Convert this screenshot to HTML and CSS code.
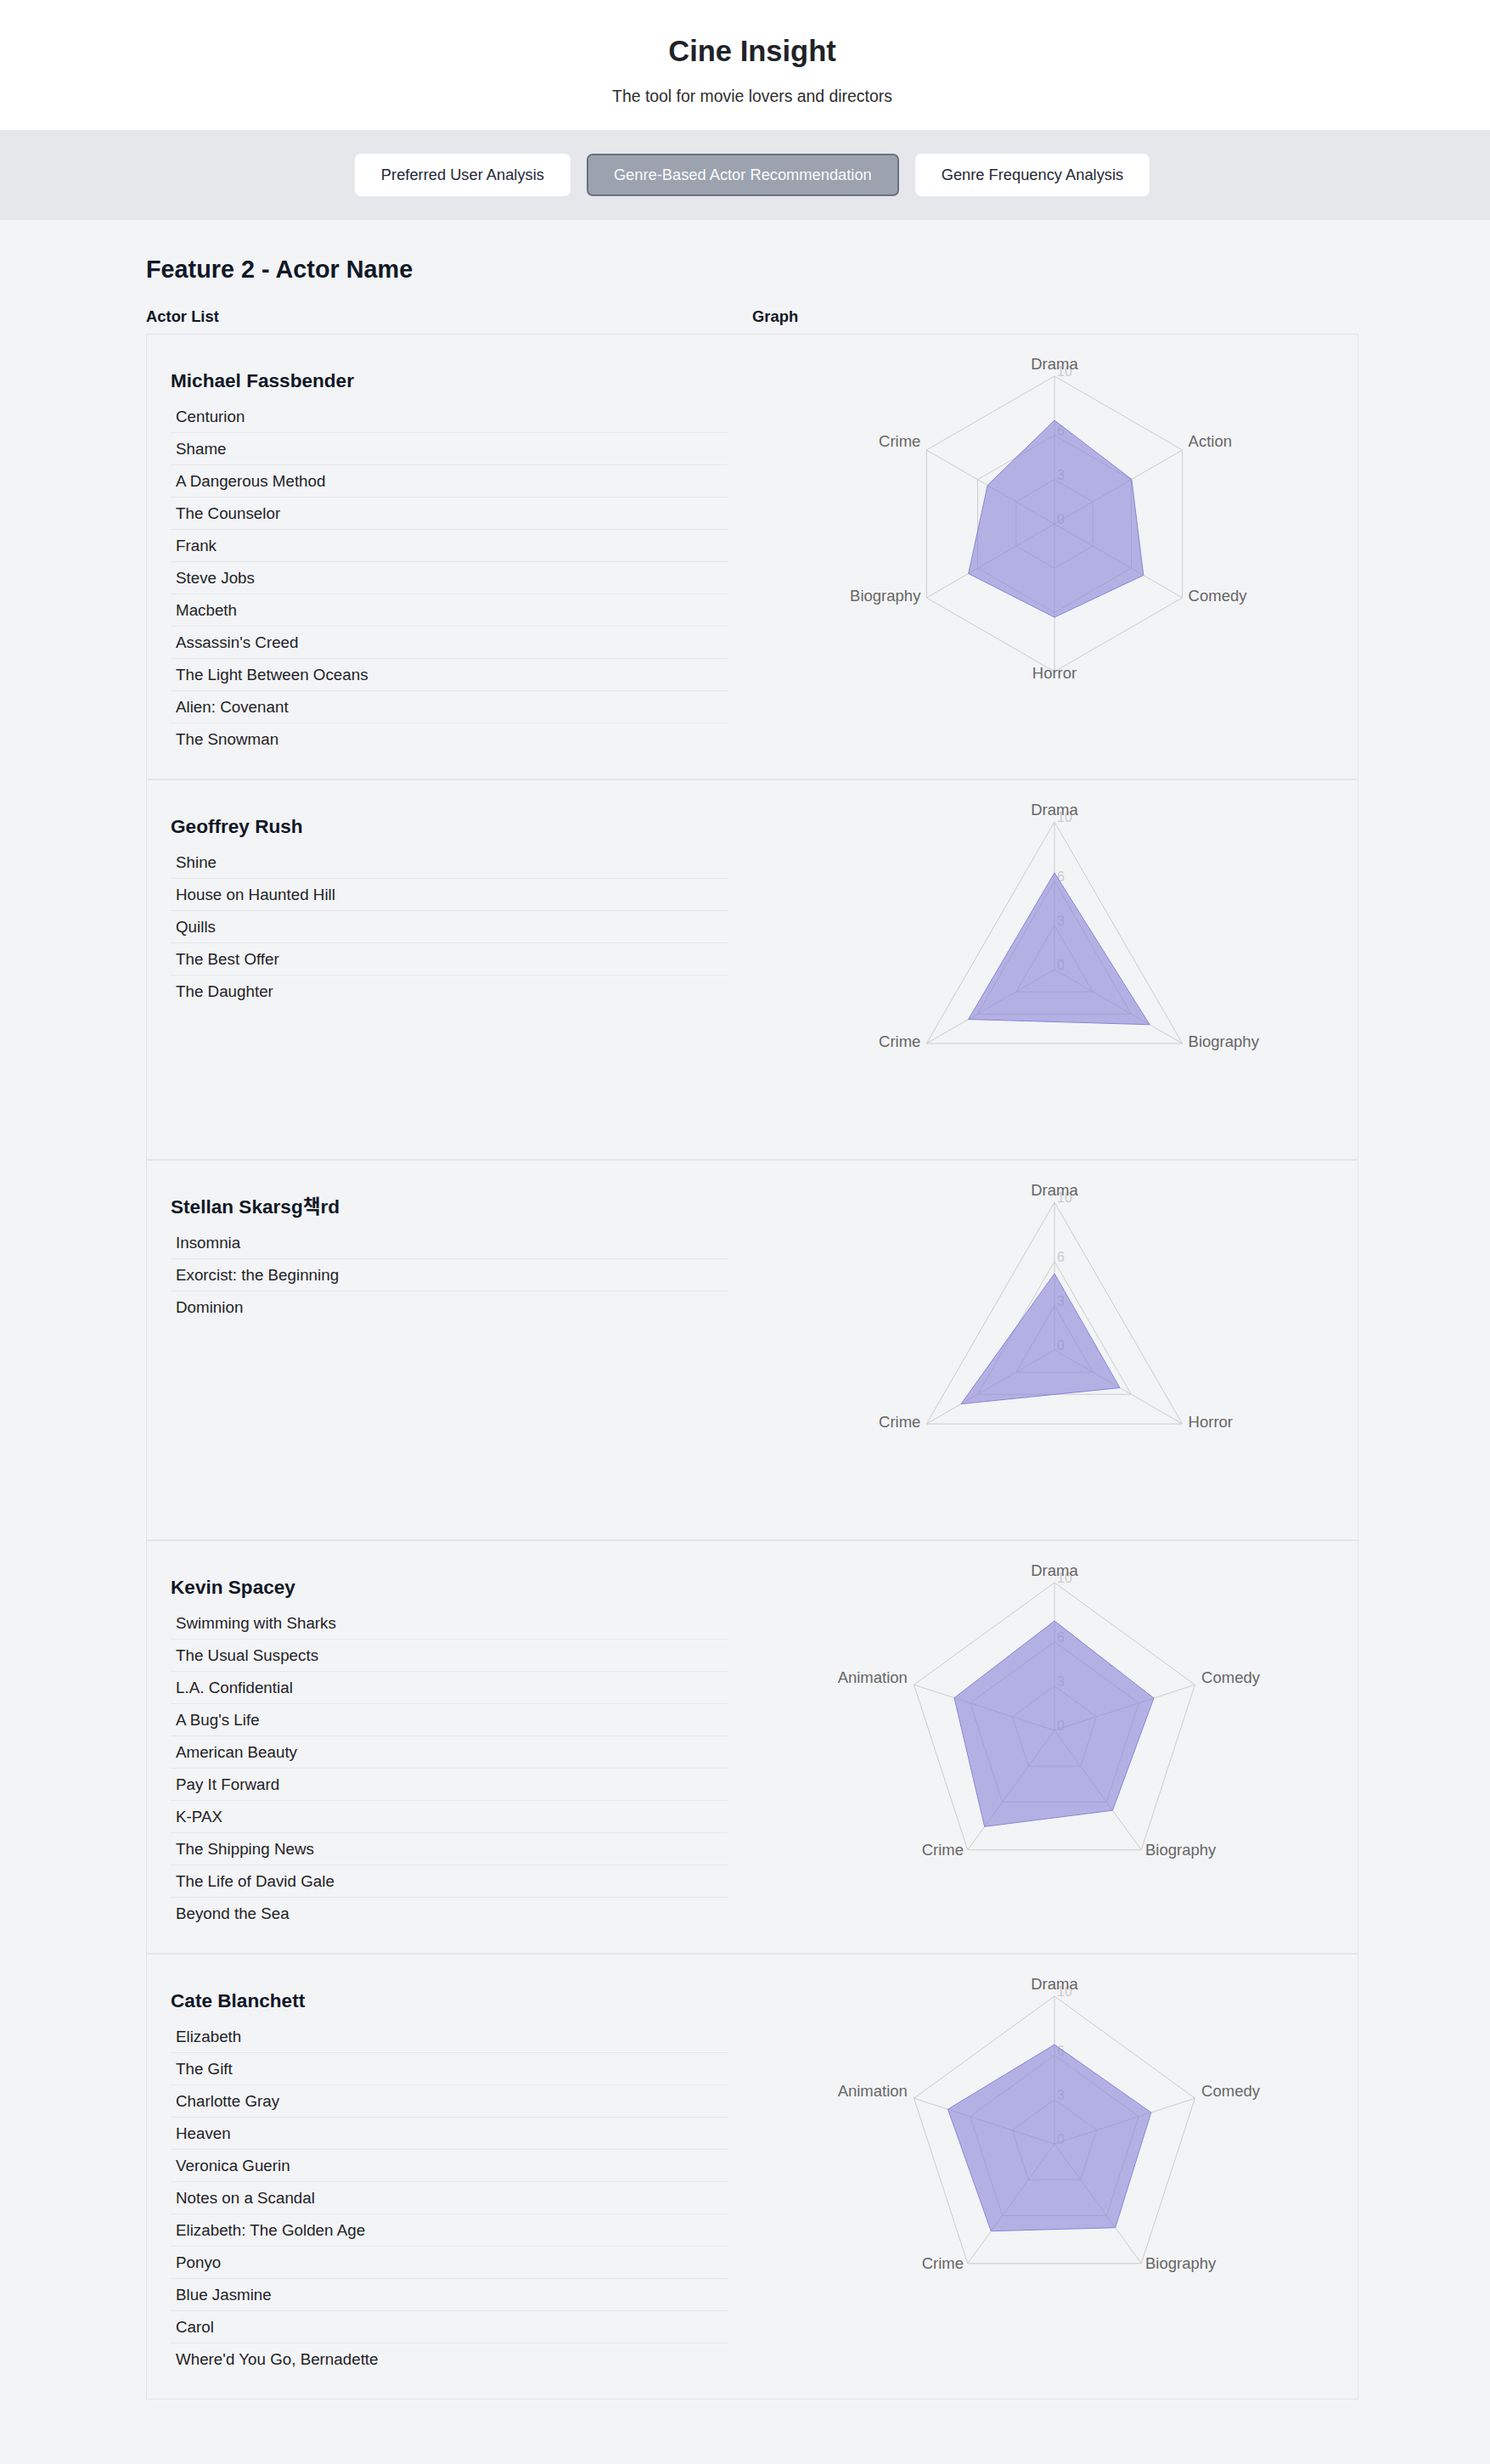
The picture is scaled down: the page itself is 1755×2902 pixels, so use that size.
FILE: index.html
```html
<!DOCTYPE html>
<html lang="en">
<head>
<meta charset="utf-8">
<title>Cine Insight</title>
<link rel="stylesheet" href="styles.css">
</head>
<body>
<header class="site-header">
  <h1 class="site-title">Cine Insight</h1>
  <p class="site-subtitle">The tool for movie lovers and directors</p>
</header>
<nav class="tabs">
  <button class="tab">Preferred User Analysis</button>
  <button class="tab tab-active">Genre-Based Actor Recommendation</button>
  <button class="tab">Genre Frequency Analysis</button>
</nav>
<main class="content">
  <h2 class="feature-title">Feature 2 - Actor Name</h2>
  <div class="col-heads"><span>Actor List</span><span>Graph</span></div>
  <section class="actor-list">

    <article class="actor-card">
      <div class="films">
        <h3 class="actor-name">Michael Fassbender</h3>
        <ul class="film-list">
          <li>Centurion</li><li>Shame</li><li>A Dangerous Method</li><li>The Counselor</li><li>Frank</li><li>Steve Jobs</li><li>Macbeth</li><li>Assassin's Creed</li><li>The Light Between Oceans</li><li>Alien: Covenant</li><li>The Snowman</li>
        </ul>
      </div>
      <div class="graph">
        <svg class="radar" width="658" height="392" viewBox="0 0 658 392">
          <polygon class="grid" points="329,22 479.69,109 479.69,283 329,370 178.31,283 178.31,109"/>
          <polygon class="grid" points="329,91.6 419.41,143.8 419.41,248.2 329,300.4 238.59,248.2 238.59,143.8"/>
          <polygon class="grid" points="329,143.8 374.21,169.9 374.21,222.1 329,248.2 283.79,222.1 283.79,169.9"/>
          <line class="grid" x1="329" y1="196" x2="329" y2="22"/>
          <line class="grid" x1="329" y1="196" x2="479.69" y2="109"/>
          <line class="grid" x1="329" y1="196" x2="479.69" y2="283"/>
          <line class="grid" x1="329" y1="196" x2="329" y2="370"/>
          <line class="grid" x1="329" y1="196" x2="178.31" y2="283"/>
          <line class="grid" x1="329" y1="196" x2="178.31" y2="109"/>
          <text class="tick" x="332" y="196">0</text><text class="tick" x="332" y="143.8">3</text><text class="tick" x="332" y="91.6">6</text><text class="tick" x="332" y="22">10</text>
          <polygon class="area" points="329,74 419.9,143.5 433.8,256.5 329,306 227.7,254.5 250.2,150.5"/>
          <text class="axis-label mid" x="329" y="14">Drama</text>
          <text class="axis-label start" x="486.6" y="105">Action</text>
          <text class="axis-label start" x="486.6" y="287">Comedy</text>
          <text class="axis-label mid" x="329" y="378">Horror</text>
          <text class="axis-label end" x="171.4" y="287">Biography</text>
          <text class="axis-label end" x="171.4" y="105">Crime</text>
        </svg>
      </div>
    </article>

    <article class="actor-card">
      <div class="films">
        <h3 class="actor-name">Geoffrey Rush</h3>
        <ul class="film-list">
          <li>Shine</li><li>House on Haunted Hill</li><li>Quills</li><li>The Best Offer</li><li>The Daughter</li>
        </ul>
      </div>
      <div class="graph">
        <svg class="radar" width="658" height="392" viewBox="0 0 658 392">
          <polygon class="grid" points="329,22 479.69,283 178.31,283"/>
          <polygon class="grid" points="329,91.6 419.41,248.2 238.59,248.2"/>
          <polygon class="grid" points="329,143.8 374.21,222.1 283.79,222.1"/>
          <line class="grid" x1="329" y1="196" x2="329" y2="22"/>
          <line class="grid" x1="329" y1="196" x2="479.69" y2="283"/>
          <line class="grid" x1="329" y1="196" x2="178.31" y2="283"/>
          <text class="tick" x="332" y="196">0</text><text class="tick" x="332" y="143.8">3</text><text class="tick" x="332" y="91.6">6</text><text class="tick" x="332" y="22">10</text>
          <polygon class="area" points="329,82 441.1,260.75 227.7,254.5"/>
          <text class="axis-label mid" x="329" y="14">Drama</text>
          <text class="axis-label start" x="486.6" y="287">Biography</text>
          <text class="axis-label end" x="171.4" y="287">Crime</text>
        </svg>
      </div>
    </article>

    <article class="actor-card">
      <div class="films">
        <h3 class="actor-name">Stellan Skarsg책rd</h3>
        <ul class="film-list">
          <li>Insomnia</li><li>Exorcist: the Beginning</li><li>Dominion</li>
        </ul>
      </div>
      <div class="graph">
        <svg class="radar" width="658" height="392" viewBox="0 0 658 392">
          <polygon class="grid" points="329,22 479.69,283 178.31,283"/>
          <polygon class="grid" points="329,91.6 419.41,248.2 238.59,248.2"/>
          <polygon class="grid" points="329,143.8 374.21,222.1 283.79,222.1"/>
          <line class="grid" x1="329" y1="196" x2="329" y2="22"/>
          <line class="grid" x1="329" y1="196" x2="479.69" y2="283"/>
          <line class="grid" x1="329" y1="196" x2="178.31" y2="283"/>
          <text class="tick" x="332" y="196">0</text><text class="tick" x="332" y="143.8">3</text><text class="tick" x="332" y="91.6">6</text><text class="tick" x="332" y="22">10</text>
          <polygon class="area" points="329,106 406,240.5 219,259.5"/>
          <text class="axis-label mid" x="329" y="14">Drama</text>
          <text class="axis-label start" x="486.6" y="287">Horror</text>
          <text class="axis-label end" x="171.4" y="287">Crime</text>
        </svg>
      </div>
    </article>

    <article class="actor-card">
      <div class="films">
        <h3 class="actor-name">Kevin Spacey</h3>
        <ul class="film-list">
          <li>Swimming with Sharks</li><li>The Usual Suspects</li><li>L.A. Confidential</li><li>A Bug's Life</li><li>American Beauty</li><li>Pay It Forward</li><li>K-PAX</li><li>The Shipping News</li><li>The Life of David Gale</li><li>Beyond the Sea</li>
        </ul>
      </div>
      <div class="graph">
        <svg class="radar" width="658" height="392" viewBox="0 0 658 392">
          <polygon class="grid" points="329,22 494.49,142.23 431.28,336.77 226.72,336.77 163.51,142.23"/>
          <polygon class="grid" points="329,91.6 428.29,163.74 390.37,280.46 267.63,280.46 229.71,163.74"/>
          <polygon class="grid" points="329,143.8 378.65,179.87 359.68,238.23 298.32,238.23 279.35,179.87"/>
          <line class="grid" x1="329" y1="196" x2="329" y2="22"/>
          <line class="grid" x1="329" y1="196" x2="494.49" y2="142.23"/>
          <line class="grid" x1="329" y1="196" x2="431.28" y2="336.77"/>
          <line class="grid" x1="329" y1="196" x2="226.72" y2="336.77"/>
          <line class="grid" x1="329" y1="196" x2="163.51" y2="142.23"/>
          <text class="tick" x="332" y="196">0</text><text class="tick" x="332" y="143.8">3</text><text class="tick" x="332" y="91.6">6</text><text class="tick" x="332" y="22">10</text>
          <polygon class="area" points="329,67 446,158 397.5,290.2 246.7,309.3 211,157.7"/>
          <text class="axis-label mid" x="329" y="14">Drama</text>
          <text class="axis-label start" x="502.1" y="139.8">Comedy</text>
          <text class="axis-label start" x="436" y="343.2">Biography</text>
          <text class="axis-label end" x="222" y="343.2">Crime</text>
          <text class="axis-label end" x="155.9" y="139.8">Animation</text>
        </svg>
      </div>
    </article>

    <article class="actor-card">
      <div class="films">
        <h3 class="actor-name">Cate Blanchett</h3>
        <ul class="film-list">
          <li>Elizabeth</li><li>The Gift</li><li>Charlotte Gray</li><li>Heaven</li><li>Veronica Guerin</li><li>Notes on a Scandal</li><li>Elizabeth: The Golden Age</li><li>Ponyo</li><li>Blue Jasmine</li><li>Carol</li><li>Where'd You Go, Bernadette</li>
        </ul>
      </div>
      <div class="graph">
        <svg class="radar" width="658" height="392" viewBox="0 0 658 392">
          <polygon class="grid" points="329,22 494.49,142.23 431.28,336.77 226.72,336.77 163.51,142.23"/>
          <polygon class="grid" points="329,91.6 428.29,163.74 390.37,280.46 267.63,280.46 229.71,163.74"/>
          <polygon class="grid" points="329,143.8 378.65,179.87 359.68,238.23 298.32,238.23 279.35,179.87"/>
          <line class="grid" x1="329" y1="196" x2="329" y2="22"/>
          <line class="grid" x1="329" y1="196" x2="494.49" y2="142.23"/>
          <line class="grid" x1="329" y1="196" x2="431.28" y2="336.77"/>
          <line class="grid" x1="329" y1="196" x2="226.72" y2="336.77"/>
          <line class="grid" x1="329" y1="196" x2="163.51" y2="142.23"/>
          <text class="tick" x="332" y="196">0</text><text class="tick" x="332" y="143.8">3</text><text class="tick" x="332" y="91.6">6</text><text class="tick" x="332" y="22">10</text>
          <polygon class="area" points="329,79 442.8,159 400.7,294.7 254.3,298.7 203.5,155.2"/>
          <text class="axis-label mid" x="329" y="14">Drama</text>
          <text class="axis-label start" x="502.1" y="139.8">Comedy</text>
          <text class="axis-label start" x="436" y="343.2">Biography</text>
          <text class="axis-label end" x="222" y="343.2">Crime</text>
          <text class="axis-label end" x="155.9" y="139.8">Animation</text>
        </svg>
      </div>
    </article>

  </section>
</main>
</body>
</html>
```

FILE: styles.css
```css
html, body {
  margin: 0;
  padding: 0;
}

body {
  background: #f3f4f6;
  color: #1f2937;
  font-family: "Liberation Sans", "Noto Sans CJK KR", Arial, sans-serif;
}

.site-header {
  background: #ffffff;
  height: 153px;
  box-sizing: border-box;
  padding: 39px 0 0 17px;
  text-align: center;
}

.site-title {
  margin: 0;
  font-size: 34.5px;
  line-height: 42px;
  font-weight: 700;
  color: #1f2328;
}

.site-subtitle {
  margin: 18px 0 0;
  font-size: 19.4px;
  line-height: 28px;
  color: #2d2d2d;
}

.tabs {
  background: #e5e7eb;
  display: flex;
  justify-content: center;
  gap: 19px;
  padding: 28px 0 28px 17px;
}

.tab {
  height: 50px;
  padding: 0 30px;
  border: 1px solid transparent;
  border-radius: 7px;
  background: #ffffff;
  color: #1f2937;
  font-family: inherit;
  font-size: 18.3px;
  cursor: pointer;
}

.tab-active {
  background: #9ca3af;
  border: 2px solid #6b7280;
  color: #f9fafb;
}

.content {
  padding: 38px 155px 40px 172px;
}

.feature-title {
  margin: 0;
  font-size: 28.8px;
  line-height: 40px;
  font-weight: 700;
  color: #111827;
}

.col-heads {
  display: grid;
  grid-template-columns: 1fr 1fr;
  margin: 23px 0 7px;
  font-size: 18.4px;
  line-height: 26px;
  font-weight: 700;
  color: #111827;
}

.actor-card {
  display: grid;
  grid-template-columns: 1fr 1fr;
  column-gap: 56px;
  align-items: start;
  padding: 27px 28px;
  border: 1px solid #e3e5e9;
}

.actor-name {
  margin: 12px 0 8px;
  font-size: 22.6px;
  line-height: 31px;
  font-weight: 700;
  color: #111827;
}

.film-list {
  list-style: none;
  margin: 0;
  padding: 0;
}

.film-list li {
  height: 37px;
  line-height: 37px;
  padding: 0 6px;
  font-size: 18.8px;
  color: #1f2328;
  border-bottom: 1px solid #e5e7eb;
}

.film-list li:last-child {
  border-bottom-color: transparent;
}

.graph {
  display: flex;
  justify-content: center;
}

.radar {
  display: block;
  overflow: visible;
}

.radar .grid {
  fill: none;
  stroke: #cccccc;
  stroke-width: 1;
}

.radar .tick {
  fill: #cccccc;
  font-size: 16px;
}

.radar .area {
  fill: #8884d8;
  fill-opacity: 0.6;
  stroke: #8884d8;
  stroke-width: 1;
}

.radar .axis-label {
  fill: #666666;
  font-size: 18.5px;
}

.radar .mid { text-anchor: middle; }
.radar .start { text-anchor: start; }
.radar .end { text-anchor: end; }
```
